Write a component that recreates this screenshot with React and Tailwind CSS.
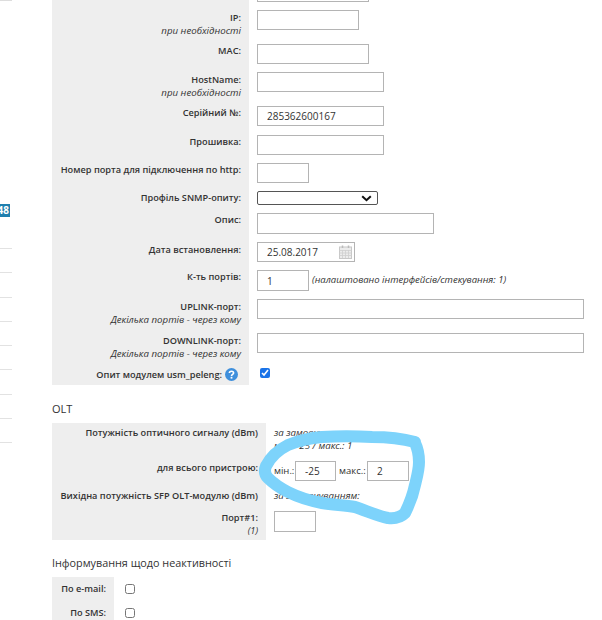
import { useState } from 'react';

const font = { fontFamily: '"Open Sans", "Noto Sans", sans-serif' };

function Field({ width, value, className = '' }) {
  return (
    <input
      type="text"
      readOnly
      value={value || ''}
      className={`block h-[20px] border border-[#b4b4b4] bg-white px-[9px] text-[10px] text-[#333] outline-none ${width} ${className}`}
    />
  );
}

function Row({ height, label, hint, labelTop = 'pt-0', labelRight = 'pr-[8px]', children }) {
  return (
    <div className={`flex ${height}`}>
      <div className={`w-[197px] shrink-0 bg-[#eeeeee] text-right ${labelRight} ${labelTop}`}>
        <div className="whitespace-nowrap text-[9.2px] leading-[13px] font-semibold text-[#333]">{label}</div>
        {hint && <div className="text-[9.7px] leading-[13px] italic text-[#333]">{hint}</div>}
      </div>
      <div className="flex-1 pl-[8px]">{children}</div>
    </div>
  );
}

export default function App() {
  const [usm, setUsm] = useState(true);
  const sideLines = [248, 272, 296, 321, 345, 369, 393, 417, 442];

  return (
    <div className="relative flex h-[620px] w-[602px] overflow-hidden bg-white text-[#333]" style={font}>
      {/* sidebar remains */}
      <div className="w-[52px] shrink-0">
        <div className="h-[1px] w-[12px] bg-[#ddd]" />
        <div className="mt-[203px] flex h-[13px] w-[10px] justify-end overflow-hidden bg-[#1f7fae] text-[10px] leading-[13px] font-bold text-white">
          <span className="pr-[1px]">48</span>
        </div>
        <div className="mt-[31px] flex flex-col">
          {sideLines.map((y) => (
            <div key={y} className="mb-[23.3px] h-[1px] w-[12px] bg-[#e2e2e2]" />
          ))}
        </div>
      </div>

      <div className="w-[550px]">
        {/* main form table */}
        <Row height="h-[10px]">
          <div className="h-[2px] w-[112px] border-x border-b border-[#b4b4b4]" />
        </Row>
        <Row height="h-[34px]" label="IP:" hint="при необхідності" labelTop="pt-[1px]">
          <Field width="w-[102px]" />
        </Row>
        <Row height="h-[28px]" label="MAC:">
          <Field width="w-[112px]" />
        </Row>
        <Row height="h-[34px]" label="HostName:" hint="при необхідності" labelTop="pt-[1px]">
          <Field width="w-[127px]" />
        </Row>
        <Row height="h-[29px]" label="Серійний №:">
          <Field width="w-[127px]" value="285362600167" />
        </Row>
        <Row height="h-[28px]" label="Прошивка:">
          <Field width="w-[127px]" />
        </Row>
        <Row height="h-[28px]" label="Номер порта для підключення по http:">
          <Field width="w-[52px]" />
        </Row>
        <Row height="h-[22px]" label="Профіль SNMP-опиту:">
          <div className="relative h-[14px] w-[121px] rounded-[2px] border border-[#555] bg-white">
            <svg className="absolute top-[3px] right-[5px]" width="11" height="7" viewBox="0 0 11 7">
              <path d="M1.2 1.2 L5.5 5.2 L9.8 1.2" fill="none" stroke="#111" strokeWidth="2" />
            </svg>
          </div>
        </Row>
        <Row height="h-[29px]" label="Опис:">
          <Field width="w-[177px]" className="h-[21px]" />
        </Row>
        <Row height="h-[28px]" label="Дата встановлення:" labelTop="pt-[1px]">
          <div className="relative w-[98px]">
            <Field width="w-[98px]" value="25.08.2017" />
            <svg className="absolute top-[3px] right-[3px]" width="13" height="14" viewBox="0 0 13 14">
              <rect x="0.5" y="2" width="12" height="11.5" fill="#ececec" stroke="#c8c8c8" />
              <path d="M0.5 5.5 H12.5 M0.5 8 H12.5 M0.5 10.5 H12.5 M3.5 5 V13 M6.5 5 V13 M9.5 5 V13" stroke="#cfcfcf" strokeWidth="0.8" />
              <path d="M3.5 0.5 V3 M9.5 0.5 V3" stroke="#bbb" strokeWidth="1.5" />
            </svg>
          </div>
        </Row>
        <Row height="h-[29px]" label="К-ть портів:">
          <div className="flex items-center gap-[3px]">
            <Field width="w-[52px]" className="h-[21px]" value="1" />
            <span className="text-[9.5px] italic text-[#333]">(налаштовано інтерфейсів/стекування: 1)</span>
          </div>
        </Row>
        <Row height="h-[34px]" label="UPLINK-порт:" hint="Декілька портів - через кому" labelTop="pt-[1px]">
          <Field width="w-[327px]" />
        </Row>
        <Row height="h-[34px]" label="DOWNLINK-порт:" hint="Декілька портів - через кому" labelTop="pt-[1px]">
          <Field width="w-[327px]" />
        </Row>
        <Row height="h-[18px]" labelRight="pr-[11px]" labelTop="pt-[1px]" label={
          <span className="inline-flex items-center gap-[2px]">
            Опит модулем usm_peleng:
            <svg width="13" height="13" viewBox="0 0 13 13" className="ml-[1px]">
              <circle cx="6.5" cy="6.5" r="6.5" fill="#3f8fdc" />
              <path d="M4.4 5 C4.4 2.6 8.6 2.6 8.6 5 C8.6 6.5 6.5 6.4 6.5 8" fill="none" stroke="#fff" strokeWidth="1.6" />
              <rect x="5.6" y="8.8" width="1.8" height="1.8" fill="#fff" />
            </svg>
          </span>
        }>
          <div className="pl-[3px] pt-[1px]">
            <input
              type="checkbox"
              checked={usm}
              onChange={(e) => setUsm(e.target.checked)}
              className="block h-[10px] w-[10px] accent-[#1a73e8]"
            />
          </div>
        </Row>

        {/* OLT */}
        <h3 className="mt-[16px] h-[22px] text-[11px] leading-[16px] font-normal text-[#333]">OLT</h3>
        <div className="w-[400px]">
          <div className="flex h-[32px]">
            <div className="w-[214px] whitespace-nowrap bg-[#eeeeee] pt-[3px] pr-[8px] text-right text-[9.2px] leading-[13px] font-semibold">
              Потужність оптичного сигналу (dBm)
            </div>
            <div className="pl-[8px] pt-[3px] text-[9.7px] leading-[13px] italic">
              за замовчуванням:
              <br />
              мін.: -25 / макс.: 1
            </div>
          </div>
          <div className="flex h-[30px]">
            <div className="w-[214px] whitespace-nowrap bg-[#eeeeee] pt-[6px] pr-[8px] text-right text-[9.2px] leading-[13px] font-semibold">
              для всього пристрою:
            </div>
            <div className="flex items-start pl-[8px] pt-[6px] text-[9.5px]">
              <span className="mt-[3px] mr-[1px] w-[20px] leading-[13px]">мін.:</span>
              <Field width="w-[41px]" className="px-[8px]" value="-25" />
              <span className="mx-[3px] mt-[3px] w-[25px] leading-[13px]">макс.:</span>
              <Field width="w-[42px]" className="px-[8px]" value="2" />
            </div>
          </div>
          <div className="flex h-[18px]">
            <div className="w-[214px] whitespace-nowrap bg-[#eeeeee] pt-[4px] pr-[8px] text-right text-[9.2px] leading-[13px] font-semibold">
              Вихідна потужність SFP OLT-модулю (dBm)
            </div>
            <div className="pl-[8px] pt-[4px] text-[9.7px] leading-[13px] italic">за замовчуванням:</div>
          </div>
          <div className="flex h-[37px]">
            <div className="w-[214px] bg-[#eeeeee] pt-[8px] pr-[8px] text-right text-[9.2px] leading-[13px] font-semibold">
              Порт#1:
              <div className="font-normal italic">(1)</div>
            </div>
            <div className="pl-[8px] pt-[8px]">
              <Field width="w-[42px]" className="h-[21px]" />
            </div>
          </div>
        </div>

        {/* inactivity */}
        <h3 className="mt-[15px] h-[22px] text-[10.8px] leading-[16px] font-medium text-[#333]">Інформування щодо неактивності</h3>
        <div className="w-[120px]">
          {['По e-mail:', 'По SMS:'].map((label) => (
            <div key={label} className="flex h-[23.5px]">
              <div className="w-[62px] bg-[#eeeeee] pt-[5px] pr-[8px] text-right text-[9.2px] leading-[13px] font-semibold">
                {label}
              </div>
              <div className="pl-[11px] pt-[7px]">
                <input type="checkbox" className="block h-[10px] w-[10px]" />
              </div>
            </div>
          ))}
        </div>
      </div>

      {/* hand drawn marker over the screenshot */}
      <svg className="pointer-events-none absolute inset-0" width="602" height="620" viewBox="0 0 602 620">
        <path
          d="M415 442 C400 438 385 437 372 437 C355 436 338 436 322 437 C308 438 298 441 288 445 C278 450 270 458 266 466 C264 471 265 475 268 478 C274 484 280 488 288 492 C300 498 311 501 322 503 C334 505 345 505 355 507 C367 511 378 516 388 518 C396 519 401 517 405 513 C409 505 413 495 415 485 C417 477 419 470 419 462 C419 455 418 449 415 443"
          fill="none"
          stroke="#7dd3fb"
          strokeWidth="12"
          strokeLinecap="round"
          strokeLinejoin="round"
        />
      </svg>
    </div>
  );
}
